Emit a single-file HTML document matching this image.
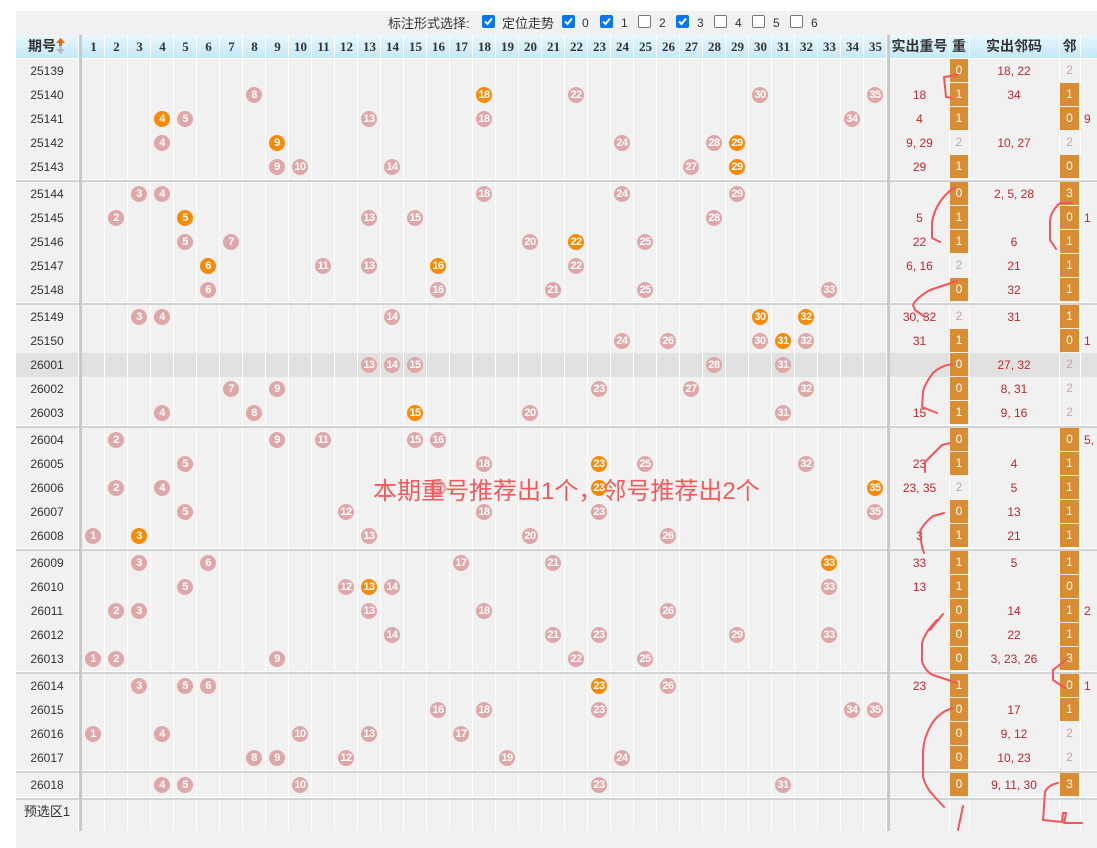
<!DOCTYPE html>
<html><head><meta charset="utf-8"><style>
*{margin:0;padding:0;box-sizing:border-box}
body{width:1097px;height:831px;overflow:hidden;background:#fff;position:relative;font-family:"Liberation Sans","Noto Sans CJK SC",sans-serif;font-size:12px;color:#333}
.top{position:absolute;left:16px;top:11px;width:1081px;height:24px;background:#f1f1f1}
.tt{position:absolute;top:15px;font-size:13px;color:#333;line-height:17px}
.cb{position:absolute;top:15px;width:13px;height:13px;border-radius:2px;border:1px solid #767676;background:#fff}
.cb.on{background:#0a75f0;border-color:#0a75f0}
.cb.on svg{position:absolute;left:0;top:0}
.hd{position:absolute;left:16px;top:35px;width:1081px;height:23px;background:linear-gradient(#eaf7fd,#c2e8f8)}
.hn{position:absolute;left:82px;top:35px;height:23px;display:flex}
.hn span{width:23px;text-align:center;font:bold 13px/23px "Liberation Serif",serif;color:#333}
.hl{position:absolute;top:35px;height:23px;font:bold 14px/23px "Liberation Sans","Noto Sans CJK SC",sans-serif;color:#333;text-align:center}
.r{position:absolute;left:16px;width:1081px;height:24px;background:#f1f1f1}
.r.dk{background:#e1e1e1}
.p{position:absolute;left:0;width:62px;top:0;line-height:24px;text-align:center;font-size:12px;color:#333;z-index:2}
.b{position:absolute;top:4px;width:16px;height:16px;border-radius:50%;background:#dfa7a7;color:#fff;font:bold 11px/16px "Liberation Sans",sans-serif;text-align:center;z-index:2;letter-spacing:-.5px}
.b.o{background:#f98a05}
.c1{position:absolute;left:874px;width:59px;line-height:24px;text-align:center;color:#c0282d;z-index:2}
.z{position:absolute;left:934px;width:18px;height:23px;line-height:23px;text-align:center;background:#d98d33;color:#fff;z-index:2}
.c2{position:absolute;left:953px;width:90px;line-height:24px;text-align:center;color:#c0282d;z-index:2}
.l{position:absolute;left:1044px;width:19px;height:23px;line-height:23px;text-align:center;background:#d98d33;color:#fff;z-index:2}
.z.g,.l.g{background:none;color:#c9a3a3}
.x{position:absolute;left:1068px;line-height:24px;color:#c0282d;z-index:2}
.vl{position:absolute;top:35px;height:796px;width:1px;background:#fff;z-index:1}
.grid{position:absolute;left:82px;top:35px;width:805px;height:796px;background:repeating-linear-gradient(90deg,transparent 0 22px,#fff 22px 23px);z-index:1}
.dv{position:absolute;top:35px;width:3px;height:796px;background:#c9c9c9;z-index:3}
.sp{position:absolute;left:16px;width:1081px;height:3px;background:#d3d3d3;border-top:1px solid #fff;z-index:1}
.ov{position:absolute;left:373px;top:477px;font-size:24px;line-height:30px;color:#f55a5a;z-index:5;white-space:nowrap;font-family:"Liberation Sans","Noto Sans CJK SC",sans-serif}
svg.ink{position:absolute;left:0;top:0;z-index:6}
</style></head><body>
<div class="top"></div>
<div class="tt" style="left:388px">标注形式选择:</div>
<div class="cb on" style="left:482px"><svg width="11" height="11" viewBox="0 0 11 11"><path d="M2 5.5 L4.5 8 L9 2.5" stroke="#fff" stroke-width="2" fill="none"/></svg></div>
<div class="tt" style="left:502px">定位走势</div>
<div class="cb on" style="left:562px"><svg width="11" height="11" viewBox="0 0 11 11"><path d="M2 5.5 L4.5 8 L9 2.5" stroke="#fff" stroke-width="2" fill="none"/></svg></div>
<div class="tt" style="left:582px;font-size:12px">0</div>
<div class="cb on" style="left:600px"><svg width="11" height="11" viewBox="0 0 11 11"><path d="M2 5.5 L4.5 8 L9 2.5" stroke="#fff" stroke-width="2" fill="none"/></svg></div>
<div class="tt" style="left:621px;font-size:12px">1</div>
<div class="cb" style="left:638px"></div>
<div class="tt" style="left:659px;font-size:12px">2</div>
<div class="cb on" style="left:676px"><svg width="11" height="11" viewBox="0 0 11 11"><path d="M2 5.5 L4.5 8 L9 2.5" stroke="#fff" stroke-width="2" fill="none"/></svg></div>
<div class="tt" style="left:697px;font-size:12px">3</div>
<div class="cb" style="left:714px"></div>
<div class="tt" style="left:735px;font-size:12px">4</div>
<div class="cb" style="left:752px"></div>
<div class="tt" style="left:773px;font-size:12px">5</div>
<div class="cb" style="left:790px"></div>
<div class="tt" style="left:811px;font-size:12px">6</div>

<div class="hd"></div>
<div class="hl" style="left:28px">期号</div>
<svg style="position:absolute;left:55px;top:38px;z-index:2" width="11" height="16" viewBox="0 0 11 16"><path d="M5.5 0 L10 5 L7 5 L7 8 L4 8 L4 5 L1 5Z" fill="#e8620a"/><path d="M5.5 16 L10 11 L7 11 L7 8.5 L4 8.5 L4 11 L1 11Z" fill="#bbb"/></svg>
<div class="hn"><span>1</span><span>2</span><span>3</span><span>4</span><span>5</span><span>6</span><span>7</span><span>8</span><span>9</span><span>10</span><span>11</span><span>12</span><span>13</span><span>14</span><span>15</span><span>16</span><span>17</span><span>18</span><span>19</span><span>20</span><span>21</span><span>22</span><span>23</span><span>24</span><span>25</span><span>26</span><span>27</span><span>28</span><span>29</span><span>30</span><span>31</span><span>32</span><span>33</span><span>34</span><span>35</span></div>
<div class="hl" style="left:890px;width:59px">实出重号</div>
<div class="hl" style="left:949px;width:20px">重</div>
<div class="hl" style="left:969px;width:90px">实出邻码</div>
<div class="hl" style="left:1059px;width:21px">邻</div>

<div class="grid"></div>
<div class="vl" style="left:78px"></div>
<div class="vl" style="left:949px"></div>
<div class="vl" style="left:969px"></div>
<div class="vl" style="left:1059px"></div>
<div class="vl" style="left:1080px"></div>
<div class="dv" style="left:79px"></div>
<div class="dv" style="left:887px"></div>

<div class="r" style="top:59px"><div class="p">25139</div><div class="c1"></div><div class="z">0</div><div class="c2">18, 22</div><div class="l g">2</div></div>
<div class="r" style="top:83px"><div class="p">25140</div><i class="b" style="left:230px">8</i><i class="b o" style="left:460px">18</i><i class="b" style="left:552px">22</i><i class="b" style="left:736px">30</i><i class="b" style="left:851px">35</i><div class="c1">18</div><div class="z">1</div><div class="c2">34</div><div class="l">1</div></div>
<div class="r" style="top:107px"><div class="p">25141</div><i class="b o" style="left:138px">4</i><i class="b" style="left:161px">5</i><i class="b" style="left:345px">13</i><i class="b" style="left:460px">18</i><i class="b" style="left:828px">34</i><div class="c1">4</div><div class="z">1</div><div class="c2"></div><div class="l">0</div><div class="x">9</div></div>
<div class="r" style="top:131px"><div class="p">25142</div><i class="b" style="left:138px">4</i><i class="b o" style="left:253px">9</i><i class="b" style="left:598px">24</i><i class="b" style="left:690px">28</i><i class="b o" style="left:713px">29</i><div class="c1">9, 29</div><div class="z g">2</div><div class="c2">10, 27</div><div class="l g">2</div></div>
<div class="r" style="top:155px"><div class="p">25143</div><i class="b" style="left:253px">9</i><i class="b" style="left:276px">10</i><i class="b" style="left:368px">14</i><i class="b" style="left:667px">27</i><i class="b o" style="left:713px">29</i><div class="c1">29</div><div class="z">1</div><div class="c2"></div><div class="l">0</div></div>
<div class="sp" style="top:179px"></div>
<div class="r" style="top:182px"><div class="p">25144</div><i class="b" style="left:115px">3</i><i class="b" style="left:138px">4</i><i class="b" style="left:460px">18</i><i class="b" style="left:598px">24</i><i class="b" style="left:713px">29</i><div class="c1"></div><div class="z">0</div><div class="c2">2, 5, 28</div><div class="l">3</div></div>
<div class="r" style="top:206px"><div class="p">25145</div><i class="b" style="left:92px">2</i><i class="b o" style="left:161px">5</i><i class="b" style="left:345px">13</i><i class="b" style="left:391px">15</i><i class="b" style="left:690px">28</i><div class="c1">5</div><div class="z">1</div><div class="c2"></div><div class="l">0</div><div class="x">1</div></div>
<div class="r" style="top:230px"><div class="p">25146</div><i class="b" style="left:161px">5</i><i class="b" style="left:207px">7</i><i class="b" style="left:506px">20</i><i class="b o" style="left:552px">22</i><i class="b" style="left:621px">25</i><div class="c1">22</div><div class="z">1</div><div class="c2">6</div><div class="l">1</div></div>
<div class="r" style="top:254px"><div class="p">25147</div><i class="b o" style="left:184px">6</i><i class="b" style="left:299px">11</i><i class="b" style="left:345px">13</i><i class="b o" style="left:414px">16</i><i class="b" style="left:552px">22</i><div class="c1">6, 16</div><div class="z g">2</div><div class="c2">21</div><div class="l">1</div></div>
<div class="r" style="top:278px"><div class="p">25148</div><i class="b" style="left:184px">6</i><i class="b" style="left:414px">16</i><i class="b" style="left:529px">21</i><i class="b" style="left:621px">25</i><i class="b" style="left:805px">33</i><div class="c1"></div><div class="z">0</div><div class="c2">32</div><div class="l">1</div></div>
<div class="sp" style="top:302px"></div>
<div class="r" style="top:305px"><div class="p">25149</div><i class="b" style="left:115px">3</i><i class="b" style="left:138px">4</i><i class="b" style="left:368px">14</i><i class="b o" style="left:736px">30</i><i class="b o" style="left:782px">32</i><div class="c1">30, 32</div><div class="z g">2</div><div class="c2">31</div><div class="l">1</div></div>
<div class="r" style="top:329px"><div class="p">25150</div><i class="b" style="left:598px">24</i><i class="b" style="left:644px">26</i><i class="b" style="left:736px">30</i><i class="b o" style="left:759px">31</i><i class="b" style="left:782px">32</i><div class="c1">31</div><div class="z">1</div><div class="c2"></div><div class="l">0</div><div class="x">1</div></div>
<div class="r dk" style="top:353px"><div class="p">26001</div><i class="b" style="left:345px">13</i><i class="b" style="left:368px">14</i><i class="b" style="left:391px">15</i><i class="b" style="left:690px">28</i><i class="b" style="left:759px">31</i><div class="c1"></div><div class="z">0</div><div class="c2">27, 32</div><div class="l g">2</div></div>
<div class="r" style="top:377px"><div class="p">26002</div><i class="b" style="left:207px">7</i><i class="b" style="left:253px">9</i><i class="b" style="left:575px">23</i><i class="b" style="left:667px">27</i><i class="b" style="left:782px">32</i><div class="c1"></div><div class="z">0</div><div class="c2">8, 31</div><div class="l g">2</div></div>
<div class="r" style="top:401px"><div class="p">26003</div><i class="b" style="left:138px">4</i><i class="b" style="left:230px">8</i><i class="b o" style="left:391px">15</i><i class="b" style="left:506px">20</i><i class="b" style="left:759px">31</i><div class="c1">15</div><div class="z">1</div><div class="c2">9, 16</div><div class="l g">2</div></div>
<div class="sp" style="top:425px"></div>
<div class="r" style="top:428px"><div class="p">26004</div><i class="b" style="left:92px">2</i><i class="b" style="left:253px">9</i><i class="b" style="left:299px">11</i><i class="b" style="left:391px">15</i><i class="b" style="left:414px">16</i><div class="c1"></div><div class="z">0</div><div class="c2"></div><div class="l">0</div><div class="x">5,</div></div>
<div class="r" style="top:452px"><div class="p">26005</div><i class="b" style="left:161px">5</i><i class="b" style="left:460px">18</i><i class="b o" style="left:575px">23</i><i class="b" style="left:621px">25</i><i class="b" style="left:782px">32</i><div class="c1">23</div><div class="z">1</div><div class="c2">4</div><div class="l">1</div></div>
<div class="r" style="top:476px"><div class="p">26006</div><i class="b" style="left:92px">2</i><i class="b" style="left:138px">4</i><i class="b" style="left:414px">16</i><i class="b o" style="left:575px">23</i><i class="b o" style="left:851px">35</i><div class="c1">23, 35</div><div class="z g">2</div><div class="c2">5</div><div class="l">1</div></div>
<div class="r" style="top:500px"><div class="p">26007</div><i class="b" style="left:161px">5</i><i class="b" style="left:322px">12</i><i class="b" style="left:460px">18</i><i class="b" style="left:575px">23</i><i class="b" style="left:851px">35</i><div class="c1"></div><div class="z">0</div><div class="c2">13</div><div class="l">1</div></div>
<div class="r" style="top:524px"><div class="p">26008</div><i class="b" style="left:69px">1</i><i class="b o" style="left:115px">3</i><i class="b" style="left:345px">13</i><i class="b" style="left:506px">20</i><i class="b" style="left:644px">26</i><div class="c1">3</div><div class="z">1</div><div class="c2">21</div><div class="l">1</div></div>
<div class="sp" style="top:548px"></div>
<div class="r" style="top:551px"><div class="p">26009</div><i class="b" style="left:115px">3</i><i class="b" style="left:184px">6</i><i class="b" style="left:437px">17</i><i class="b" style="left:529px">21</i><i class="b o" style="left:805px">33</i><div class="c1">33</div><div class="z">1</div><div class="c2">5</div><div class="l">1</div></div>
<div class="r" style="top:575px"><div class="p">26010</div><i class="b" style="left:161px">5</i><i class="b" style="left:322px">12</i><i class="b o" style="left:345px">13</i><i class="b" style="left:368px">14</i><i class="b" style="left:805px">33</i><div class="c1">13</div><div class="z">1</div><div class="c2"></div><div class="l">0</div></div>
<div class="r" style="top:599px"><div class="p">26011</div><i class="b" style="left:92px">2</i><i class="b" style="left:115px">3</i><i class="b" style="left:345px">13</i><i class="b" style="left:460px">18</i><i class="b" style="left:644px">26</i><div class="c1"></div><div class="z">0</div><div class="c2">14</div><div class="l">1</div><div class="x">2</div></div>
<div class="r" style="top:623px"><div class="p">26012</div><i class="b" style="left:368px">14</i><i class="b" style="left:529px">21</i><i class="b" style="left:575px">23</i><i class="b" style="left:713px">29</i><i class="b" style="left:805px">33</i><div class="c1"></div><div class="z">0</div><div class="c2">22</div><div class="l">1</div></div>
<div class="r" style="top:647px"><div class="p">26013</div><i class="b" style="left:69px">1</i><i class="b" style="left:92px">2</i><i class="b" style="left:253px">9</i><i class="b" style="left:552px">22</i><i class="b" style="left:621px">25</i><div class="c1"></div><div class="z">0</div><div class="c2">3, 23, 26</div><div class="l">3</div></div>
<div class="sp" style="top:671px"></div>
<div class="r" style="top:674px"><div class="p">26014</div><i class="b" style="left:115px">3</i><i class="b" style="left:161px">5</i><i class="b" style="left:184px">6</i><i class="b o" style="left:575px">23</i><i class="b" style="left:644px">26</i><div class="c1">23</div><div class="z">1</div><div class="c2"></div><div class="l">0</div><div class="x">1</div></div>
<div class="r" style="top:698px"><div class="p">26015</div><i class="b" style="left:414px">16</i><i class="b" style="left:460px">18</i><i class="b" style="left:575px">23</i><i class="b" style="left:828px">34</i><i class="b" style="left:851px">35</i><div class="c1"></div><div class="z">0</div><div class="c2">17</div><div class="l">1</div></div>
<div class="r" style="top:722px"><div class="p">26016</div><i class="b" style="left:69px">1</i><i class="b" style="left:138px">4</i><i class="b" style="left:276px">10</i><i class="b" style="left:345px">13</i><i class="b" style="left:437px">17</i><div class="c1"></div><div class="z">0</div><div class="c2">9, 12</div><div class="l g">2</div></div>
<div class="r" style="top:746px"><div class="p">26017</div><i class="b" style="left:230px">8</i><i class="b" style="left:253px">9</i><i class="b" style="left:322px">12</i><i class="b" style="left:483px">19</i><i class="b" style="left:598px">24</i><div class="c1"></div><div class="z">0</div><div class="c2">10, 23</div><div class="l g">2</div></div>
<div class="sp" style="top:770px"></div>
<div class="r" style="top:773px"><div class="p">26018</div><i class="b" style="left:138px">4</i><i class="b" style="left:161px">5</i><i class="b" style="left:276px">10</i><i class="b" style="left:575px">23</i><i class="b" style="left:759px">31</i><div class="c1"></div><div class="z">0</div><div class="c2">9, 11, 30</div><div class="l">3</div></div>
<div class="sp" style="top:797px"></div>
<div class="r" style="top:800px"><div class="p" style="font-size:13px">预选区1</div></div>
<div class="r" style="top:824px"><div class="p"></div></div>

<div class="ov">本期重号推荐出1个，邻号推荐出2个</div>

<svg class="ink" width="1097" height="831" viewBox="0 0 1097 831" fill="none" stroke="#f5555a" stroke-width="2" stroke-linecap="round" stroke-linejoin="round">
<path d="M957 75 L944 77 L946 97 L952 98"/>
<path d="M955 187 Q936 200 932 222 L932 238 L940 242"/>
<path d="M1072 203 L1060 203 Q1050 212 1050 222 L1050 240 L1056 249"/>
<path d="M957 281 L930 290 Q916 298 913 305 L915 310 L925 317"/>
<path d="M952 364 Q940 366 933 373 Q924 385 923 392 L922 407 L937 413"/>
<path d="M950 443 L942 445 L925 462 L925 472"/>
<path d="M944 513 L933 516 Q922 525 920 532 Q921 545 924 553"/>
<path d="M943 614 L930 630"/>
<path d="M937 620 Q925 632 922 643 L922 662 Q926 672 933 675 L957 683"/>
<path d="M1067 659 L1053 670 L1053 680 L1065 688"/>
<path d="M953 708 Q938 712 930 727 Q923 740 923 753 L923 777 Q926 788 933 795 L944 807"/>
<path d="M963 806 L958 830"/>
<path d="M1058 783 Q1048 785 1045 792 L1043 820 L1062 822 L1063 813 L1066 813 L1064 823 L1082 823"/>
</svg>
</body></html>
